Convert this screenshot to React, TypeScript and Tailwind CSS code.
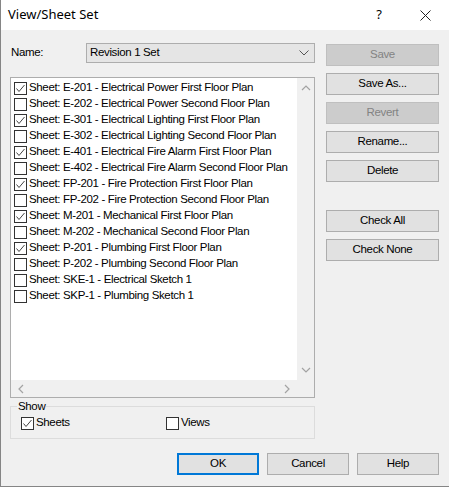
import React from 'react'

type Row = { label: string, checked: boolean }

const rows: Row[] = [
  { label: 'Sheet: E-201 - Electrical Power First Floor Plan', checked: true },
  { label: 'Sheet: E-202 - Electrical Power Second Floor Plan', checked: false },
  { label: 'Sheet: E-301 - Electrical Lighting First Floor Plan', checked: true },
  { label: 'Sheet: E-302 - Electrical Lighting Second Floor Plan', checked: false },
  { label: 'Sheet: E-401 - Electrical Fire Alarm First Floor Plan', checked: true },
  { label: 'Sheet: E-402 - Electrical Fire Alarm Second Floor Plan', checked: false },
  { label: 'Sheet: FP-201 - Fire Protection First Floor Plan', checked: true },
  { label: 'Sheet: FP-202 - Fire Protection Second Floor Plan', checked: false },
  { label: 'Sheet: M-201 - Mechanical First Floor Plan', checked: true },
  { label: 'Sheet: M-202 - Mechanical Second Floor Plan', checked: false },
  { label: 'Sheet: P-201 - Plumbing First Floor Plan', checked: true },
  { label: 'Sheet: P-202 - Plumbing Second Floor Plan', checked: false },
  { label: 'Sheet: SKE-1 - Electrical Sketch 1', checked: false },
  { label: 'Sheet: SKP-1 - Plumbing Sketch 1', checked: false },
]

const Check = ({ checked }: { checked: boolean }) => (
  <span className="w-[13px] h-[13px] border border-[#333] bg-white flex items-center justify-center shrink-0">
    {checked && (
      <svg width="11" height="11" viewBox="0 0 11 11">
        <polyline points="1.5,5.5 4,8.5 9.5,2" fill="none" stroke="#444" strokeWidth="1" />
      </svg>
    )}
  </span>
)

const Chevron = ({ dir }: { dir: 'up' | 'down' | 'left' | 'right' }) => {
  const pts = {
    up: '1,6 5,2 9,6',
    down: '1,2 5,6 9,2',
    left: '6,1 2,5 6,9',
    right: '2,1 6,5 2,9',
  }[dir]
  const vert = dir == 'up' || dir == 'down'
  return (
    <svg width={vert ? 10 : 8} height={vert ? 8 : 10} viewBox={vert ? '0 0 10 8' : '0 0 8 10'}>
      <polyline points={pts} fill="none" stroke="#a3a3a3" strokeWidth="1.2" />
    </svg>
  )
}

const Btn = ({ children, disabled, primary }: { children: React.ReactNode, disabled?: boolean, primary?: boolean }) => (
  <div
    className={
      'h-[22px] flex items-center justify-center ' +
      (disabled
        ? 'bg-[#cccccc] border border-[#bfbfbf] text-[#838383]'
        : primary
          ? 'bg-[#e1e1e1] border-2 border-[#0078d7] text-black'
          : 'bg-[#e1e1e1] border border-[#adadad] text-black')
    }
  >
    {children}
  </div>
)

const App = () => {
  return (
    <div className="w-[449px] h-[487px] bg-[#f0f0f0] border-l border-b border-[#858585] flex flex-col text-black font-['Liberation_Sans',Arial,sans-serif] text-[11.5px] tracking-[-0.35px] overflow-hidden">
      <div className="h-[30px] bg-white flex items-center shrink-0 tracking-normal">
        <span className="ml-[7px] text-[13px] font-['Noto_Sans',sans-serif]">View/Sheet Set</span>
        <span className="ml-auto mr-[38px] text-[13px] font-['Noto_Sans',sans-serif]">?</span>
        <svg className="mr-[18px]" width="11" height="11" viewBox="0 0 11 11">
          <path d="M0.5 0.5 L10.5 10.5 M10.5 0.5 L0.5 10.5" stroke="#222" strokeWidth="1" />
        </svg>
      </div>

      <div className="flex">
        <div className="ml-[9px] w-[305px] flex flex-col">
          <div className="mt-[13px] h-[20px] flex items-center">
            <span className="ml-[1px] w-[75px]">Name:</span>
            <div className="flex-1 h-[20px] bg-[#e5e5e5] border border-[#adadad] flex items-center pl-[3px] pr-[5px]">
              <span>Revision 1 Set</span>
              <svg className="ml-auto" width="10" height="6" viewBox="0 0 10 6">
                <polyline points="0.5,0.5 5,5 9.5,0.5" fill="none" stroke="#555" strokeWidth="1" />
              </svg>
            </div>
          </div>

          <div className="mt-[14px] h-[321px] border border-[#adadad] bg-white flex flex-col">
            <div className="flex flex-1 min-h-0">
              <div className="flex-1 min-w-0 overflow-hidden pt-[2px] pl-[3px]">
                {rows.map((r, i) => (
                  <div key={i} className="h-[16px] flex items-center gap-[2px] whitespace-nowrap">
                    <Check checked={r.checked} />
                    <span>{r.label}</span>
                  </div>
                ))}
              </div>
              <div className="w-[17px] shrink-0 bg-[#f0f0f0] flex flex-col items-center justify-between py-[6px]">
                <Chevron dir="up" />
                <Chevron dir="down" />
              </div>
            </div>
            <div className="h-[17px] bg-[#f0f0f0] flex items-center">
              <div className="flex-1 flex items-center justify-between px-[6px]">
                <Chevron dir="left" />
                <Chevron dir="right" />
              </div>
              <div className="w-[17px]" />
            </div>
          </div>

          <div className="relative mt-[8px] h-[33px] border border-[#dcdcdc]">
            <span className="absolute left-[6px] top-[-8px] bg-[#f0f0f0] px-[1px] leading-[14px]">Show</span>
            <div className="flex items-center h-full pt-[1px]">
              <div className="ml-[10px] w-[145px] flex items-center gap-[2px]">
                <Check checked={true} />
                <span>Sheets</span>
              </div>
              <div className="flex items-center gap-[2px]">
                <Check checked={false} />
                <span>Views</span>
              </div>
            </div>
          </div>
        </div>

        <div className="ml-[11px] w-[113px] flex flex-col gap-[7px] mt-[14px]">
          <Btn disabled>Save</Btn>
          <Btn>Save As...</Btn>
          <Btn disabled>Revert</Btn>
          <Btn>Rename...</Btn>
          <Btn>Delete</Btn>
          <div className="h-[14px]" />
          <Btn>Check All</Btn>
          <Btn>Check None</Btn>
        </div>
      </div>

      <div className="mt-[14px] flex justify-end gap-[8px] pr-[10px]">
        <div className="w-[82px]"><Btn primary>OK</Btn></div>
        <div className="w-[82px]"><Btn>Cancel</Btn></div>
        <div className="w-[82px]"><Btn>Help</Btn></div>
      </div>
    </div>
  )
}

export default App
